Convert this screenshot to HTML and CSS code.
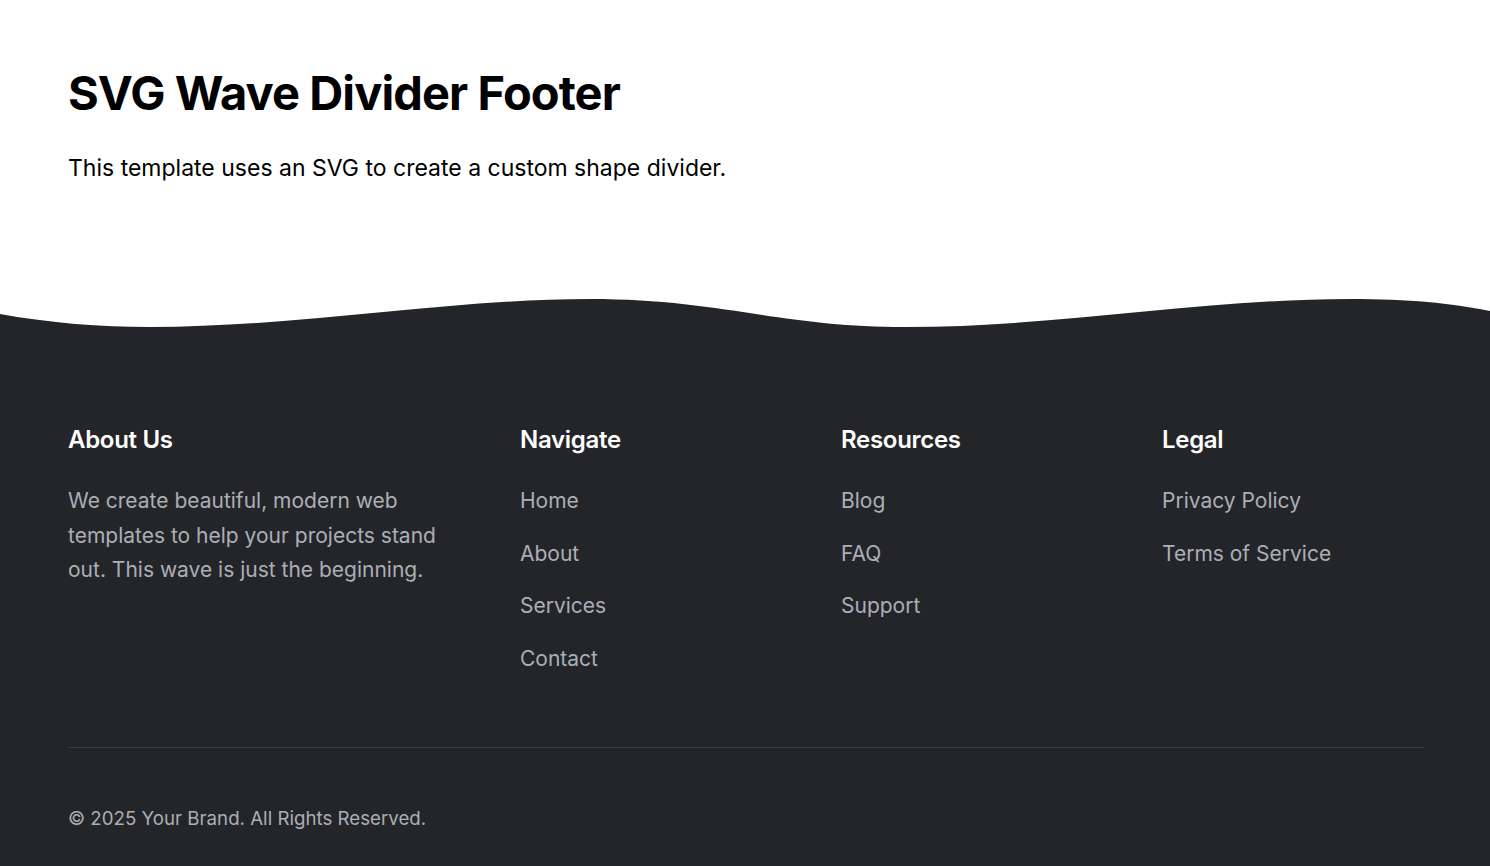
FILE: index.html
```html
<!DOCTYPE html>
<html>
<head>
  <title>SVG Wave Divider Footer</title>
  <link rel="stylesheet" href="styles.css">
</head>
<body>
  <main class="content">
    <h1>SVG Wave Divider Footer</h1>
    <p>This template uses an SVG to create a custom shape divider.</p>
  </main>

  <footer class="site-footer">
    <!-- wave shape sitting on top of the footer -->
    <div class="wave">
      <svg viewBox="0 0 1490 40" preserveAspectRatio="none">
        <path d="M0,19 C50,28 100,32 150,32 C300,32 450,4 590,4 C720,4 780,32 905,32 C1060,32 1200,4 1350,4 C1410,4 1450,8 1490,16 V40 H0 Z" fill="#242529" />
      </svg>
    </div>

    <div class="footer-inner">
      <div class="footer-grid">
        <div class="footer-col">
          <h3>About Us</h3>
          <p>We create beautiful, modern web templates to help your projects stand out. This wave is just the beginning.</p>
        </div>
        <div class="footer-col">
          <h3>Navigate</h3>
          <ul>
            <li><a href="#">Home</a></li>
            <li><a href="#">About</a></li>
            <li><a href="#">Services</a></li>
            <li><a href="#">Contact</a></li>
          </ul>
        </div>
        <div class="footer-col">
          <h3>Resources</h3>
          <ul>
            <li><a href="#">Blog</a></li>
            <li><a href="#">FAQ</a></li>
            <li><a href="#">Support</a></li>
          </ul>
        </div>
        <div class="footer-col">
          <h3>Legal</h3>
          <ul>
            <li><a href="#">Privacy Policy</a></li>
            <li><a href="#">Terms of Service</a></li>
          </ul>
        </div>
      </div>

      <div class="footer-bottom">
        <p>&copy; 2025 Your Brand. All Rights Reserved.</p>
      </div>
    </div>
  </footer>
</body>
</html>
```

FILE: styles.css
```css
body {
  margin: 0;
  font-family: Inter, "Noto Sans", sans-serif;
  color: #000;
  background: #fff;
}

.content {
  padding: 64px 68px 0;
  height: 231px;
}

.content h1 {
  margin: 0;
  font-size: 47px;
  font-weight: 700;
  line-height: 58px;
  letter-spacing: -0.9px;
}

.content p {
  margin: 30px 0 0;
  font-size: 23px;
  line-height: 32px;
}

.site-footer {
  background: #242529;
}

.wave {
  background: #fff;
  line-height: 0;
}

.wave svg {
  display: block;
  width: 100%;
  height: 40px;
}

.footer-inner {
  padding: 90px 66px 0 68px;
}

.footer-grid {
  display: grid;
  grid-template-columns: 1.5fr 1fr 1fr 1fr;
  gap: 59px;
}

.footer-col h3 {
  margin: 0;
  color: #fff;
  font-size: 24px;
  font-weight: 600;
  line-height: 30px;
  letter-spacing: -0.3px;
}

.footer-col p {
  margin: 29px 0 0;
  color: #abafb6;
  font-size: 21px;
  line-height: 34.5px;
  padding-right: 8px;
}

.footer-col ul {
  list-style: none;
  margin: 32px 0 0;
  padding: 0;
}

.footer-col li {
  font-size: 21px;
  line-height: 28px;
  margin-bottom: 24.5px;
}

.footer-col a {
  color: #abafb6;
  text-decoration: none;
}

.footer-bottom {
  margin-top: 50px;
  border-top: 1px solid #3c3d42;
  padding: 59px 0 36px;
}

.footer-bottom p {
  margin: 0;
  color: #abafb6;
  font-size: 18.7px;
  line-height: 24px;
}
```
